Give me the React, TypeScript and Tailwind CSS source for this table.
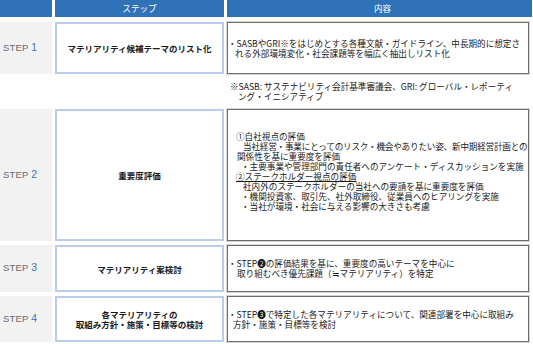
import React from "react";

const F = { fontFamily: '"Noto Sans CJK JP", "Noto Sans", sans-serif' };

function StepLabel({ n, className = "" }: { n: string; className?: string }) {
  return (
    <div className={"bg-[#f2f2f2] flex items-center pl-[3px] pb-[1px] " + className}>
      <span className="text-[9.5px] text-[#6a6a6a] tracking-[0.2px]" style={{ fontFamily: '"Liberation Sans", sans-serif' }}>
        STEP <span className="text-[10.5px] text-[#3f73c4]">{n}</span>
      </span>
    </div>
  );
}

function StepBox({ children }: { children: React.ReactNode }) {
  return (
    <div className="flex-1 border-2 border-[#bccdeb] bg-white flex flex-col items-center justify-center text-[8.5px] font-bold text-[#1a1a1a] leading-[10px] text-center">
      {children}
    </div>
  );
}

function ContentBox({ children, className = "" }: { children: React.ReactNode; className?: string }) {
  return (
    <div className={"flex-1 border border-[#6e6e6e] shadow-[0_0_0_1px_#d4d4d4] bg-white flex flex-col justify-center text-[8.6px] text-[#1a1a1a] whitespace-nowrap " + className}>
      {children}
    </div>
  );
}

export default function App() {
  return (
    <div className="w-[533px] h-[344px] bg-white overflow-hidden" style={F}>
      <div className="grid grid-cols-[52px_169px_305px] gap-x-[3px]">
        {/* header */}
        <div className="h-[17px] bg-[#2f72b8]" />
        <div className="h-[17px] bg-[#2f72b8] text-white text-[8.6px] flex items-center justify-center">ステップ</div>
        <div className="h-[17px] bg-[#2f72b8] text-white text-[8.6px] flex items-center justify-center pl-[6px]">内容</div>

        {/* row 1 */}
        <StepLabel n="1" className="mt-[5px] h-[52px]" />
        <div className="mt-[5px] h-[52px] flex">
          <StepBox>マテリアリティ候補テーマのリスト化</StepBox>
        </div>
        <div className="mt-[5px] h-[52px] flex pr-[3px]">
          <ContentBox className="leading-[10px] pb-[1px]">
            <div>・SASBやGRI※をはじめとする各種文献・ガイドライン、中長期的に想定さ</div>
            <div className="ml-[7px]">れる外部環境変化・社会課題等を幅広く抽出しリスト化</div>
          </ContentBox>
        </div>

        {/* note row */}
        <div className="h-[35px]" />
        <div className="h-[35px]" />
        <div className="h-[35px] flex flex-col justify-center pl-[3px] pb-[2px] text-[8.6px] leading-[10px] text-[#1a1a1a] whitespace-nowrap">
          <div>※SASB: サステナビリティ会計基準審議会、GRI: グローバル・レポーティ</div>
          <div className="ml-[8px]">ング・イニシアティブ</div>
        </div>

        {/* row 2 */}
        <StepLabel n="2" className="h-[132px]" />
        <div className="h-[132px] flex">
          <StepBox>重要度評価</StepBox>
        </div>
        <div className="h-[132px] flex pr-[3px]">
          <ContentBox className="leading-[10px] pl-[8px] pb-[8px]">
            <div>①自社視点の評価</div>
            <div className="ml-[7px] tracking-[-0.2px]">当社経営・事業にとってのリスク・機会やありたい姿、新中期経営計画との</div>
            <div className="ml-[1px]">関係性を基に重要度を評価</div>
            <div className="ml-[5px]">・主要事業や管理部門の責任者へのアンケート・ディスカッションを実施</div>
            <div className="underline underline-offset-[1px]">②ステークホルダー視点の評価</div>
            <div className="ml-[7px]">社内外のステークホルダーの当社への要請を基に重要度を評価</div>
            <div className="ml-[5px]">・機関投資家、取引先、社外取締役、従業員へのヒアリングを実施</div>
            <div className="ml-[5px]">・当社が環境・社会に与える影響の大きさも考慮</div>
          </ContentBox>
        </div>

        {/* row 3 */}
        <StepLabel n="3" className="mt-[4px] h-[47px]" />
        <div className="mt-[4px] h-[47px] flex">
          <StepBox>マテリアリティ案検討</StepBox>
        </div>
        <div className="mt-[4px] h-[47px] flex pr-[3px]">
          <ContentBox className="leading-[10px] pb-[1px]">
            <div>・STEP❷の評価結果を基に、重要度の高いテーマを中心に</div>
            <div className="ml-[9px]">取り組むべき優先課題（≒マテリアリティ）を特定</div>
          </ContentBox>
        </div>

        {/* row 4 */}
        <StepLabel n="4" className="mt-[4px] h-[46px]" />
        <div className="mt-[4px] h-[46px] flex">
          <StepBox>
            <div>各マテリアリティの</div>
            <div>取組み方針・施策・目標等の検討</div>
          </StepBox>
        </div>
        <div className="mt-[4px] h-[46px] flex pr-[3px]">
          <ContentBox className="leading-[10px] pb-[1px]">
            <div>・STEP❸で特定した各マテリアリティについて、関連部署を中心に取組み</div>
            <div className="ml-[5px]">方針・施策・目標等を検討</div>
          </ContentBox>
        </div>
      </div>
    </div>
  );
}
